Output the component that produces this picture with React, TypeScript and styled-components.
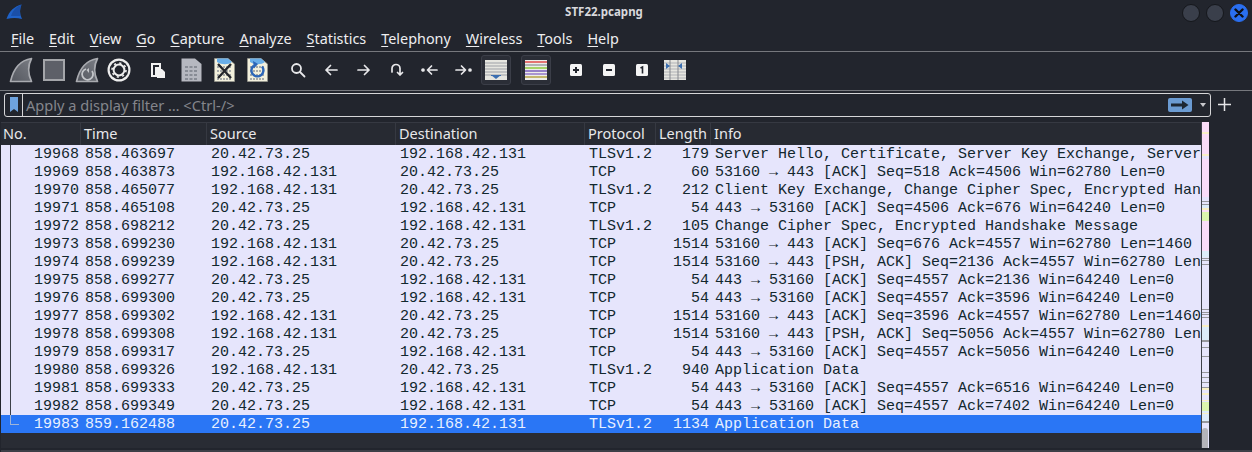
import type { ReactNode } from "react";
import styled, { createGlobalStyle } from "styled-components";

const rows = [
  ["19968", "858.463697", "20.42.73.25", "192.168.42.131", "TLSv1.2", "179", "Server Hello, Certificate, Server Key Exchange, Server Hello Done"],
  ["19969", "858.463873", "192.168.42.131", "20.42.73.25", "TCP", "60", "53160 → 443 [ACK] Seq=518 Ack=4506 Win=62780 Len=0"],
  ["19970", "858.465077", "192.168.42.131", "20.42.73.25", "TLSv1.2", "212", "Client Key Exchange, Change Cipher Spec, Encrypted Handshake Message"],
  ["19971", "858.465108", "20.42.73.25", "192.168.42.131", "TCP", "54", "443 → 53160 [ACK] Seq=4506 Ack=676 Win=64240 Len=0"],
  ["19972", "858.698212", "20.42.73.25", "192.168.42.131", "TLSv1.2", "105", "Change Cipher Spec, Encrypted Handshake Message"],
  ["19973", "858.699230", "192.168.42.131", "20.42.73.25", "TCP", "1514", "53160 → 443 [ACK] Seq=676 Ack=4557 Win=62780 Len=1460"],
  ["19974", "858.699239", "192.168.42.131", "20.42.73.25", "TCP", "1514", "53160 → 443 [PSH, ACK] Seq=2136 Ack=4557 Win=62780 Len=1460"],
  ["19975", "858.699277", "20.42.73.25", "192.168.42.131", "TCP", "54", "443 → 53160 [ACK] Seq=4557 Ack=2136 Win=64240 Len=0"],
  ["19976", "858.699300", "20.42.73.25", "192.168.42.131", "TCP", "54", "443 → 53160 [ACK] Seq=4557 Ack=3596 Win=64240 Len=0"],
  ["19977", "858.699302", "192.168.42.131", "20.42.73.25", "TCP", "1514", "53160 → 443 [ACK] Seq=3596 Ack=4557 Win=62780 Len=1460"],
  ["19978", "858.699308", "192.168.42.131", "20.42.73.25", "TCP", "1514", "53160 → 443 [PSH, ACK] Seq=5056 Ack=4557 Win=62780 Len=1460"],
  ["19979", "858.699317", "20.42.73.25", "192.168.42.131", "TCP", "54", "443 → 53160 [ACK] Seq=4557 Ack=5056 Win=64240 Len=0"],
  ["19980", "858.699326", "192.168.42.131", "20.42.73.25", "TLSv1.2", "940", "Application Data"],
  ["19981", "858.699333", "20.42.73.25", "192.168.42.131", "TCP", "54", "443 → 53160 [ACK] Seq=4557 Ack=6516 Win=64240 Len=0"],
  ["19982", "858.699349", "20.42.73.25", "192.168.42.131", "TCP", "54", "443 → 53160 [ACK] Seq=4557 Ack=7402 Win=64240 Len=0"],
  ["19983", "859.162488", "20.42.73.25", "192.168.42.131", "TLSv1.2", "1134", "Application Data"],
];

const menus: [string, string][] = [
  ["F", "ile"],
  ["E", "dit"],
  ["V", "iew"],
  ["G", "o"],
  ["C", "apture"],
  ["A", "nalyze"],
  ["S", "tatistics"],
  ["T", "elephony"],
  ["W", "ireless"],
  ["T", "ools"],
  ["H", "elp"],
];

const columns = "80px 126px 189px 189px 71px 55px 491px";
const headers = ["No.", "Time", "Source", "Destination", "Protocol", "Length", "Info"];

const YELLOW = "#f8efc4";
const LAVENDER = "#e6e5fc";
const BLUE = "#dcecfa";
const GREEN = "#dcf5ae";
const GREY = "#96979c";

// colored marks in the packet minimap: [top, height, color]
const marks: [number, number, string][] = [
  [10, 2, YELLOW],
  [32, 2, YELLOW],
  [34, 3, LAVENDER],
  [75, 12, LAVENDER],
  [79, 1, GREY],
  [82, 1, GREY],
  [83, 3, BLUE],
  [86, 2, YELLOW],
  [90, 9, GREEN],
  [129, 6, BLUE],
  [135, 69, LAVENDER],
  [136, 1, GREY],
  [138, 1, GREY],
  [142, 1, GREY],
  [187, 1, GREY],
  [190, 1, GREY],
  [192, 1, GREY],
  [195, 1, GREY],
  [203, 2, YELLOW],
  [205, 13, BLUE],
  [218, 2, GREY],
  [220, 106, LAVENDER],
  [225, 1, GREY],
  [234, 1, GREY],
  [250, 1, GREY],
  [255, 1, GREY],
  [260, 1, GREY],
  [265, 1, GREY],
  [266, 2, YELLOW],
  [271, 2, YELLOW],
  [278, 1, YELLOW],
  [280, 9, GREEN],
  [289, 10, BLUE],
  [291, 1, YELLOW],
  [299, 2, GREY],
];

const GlobalStyle = createGlobalStyle`
  html, body {
    margin: 0;
    background: #22252d;
    overflow: hidden;
  }
`;

const Window = styled.div`
  width: 1252px;
  height: 452px;
  display: flex;
  flex-direction: column;
  background: #22252d;
  color: #e4e4e6;
  font-family: "Noto Sans", sans-serif;
  overflow: hidden;
`;

const TitleBar = styled.div`
  height: 26px;
  flex: none;
  display: flex;
  align-items: center;
  justify-content: space-between;
  padding: 0 4px 2px 6px;
  box-sizing: border-box;
  position: relative;
`;

const Title = styled.div`
  position: absolute;
  left: 0;
  right: 44px;
  top: 4px;
  text-align: center;
  font-size: 11.5px;
  font-weight: 700;
  line-height: 16px;
  color: #d8d8dc;
`;

const WindowButtons = styled.div`
  display: flex;
  gap: 6px;
  margin-top: 2px;
`;

const WindowButton = styled.div<{ $close?: boolean }>`
  width: 18px;
  height: 18px;
  box-sizing: border-box;
  border-radius: 50%;
  background: ${(p) => (p.$close ? "#2a6ff0" : "#3a3f4b")};
  border: 1px solid ${(p) => (p.$close ? "#2a6ff0" : "#15171c")};
  display: flex;
  align-items: center;
  justify-content: center;
`;

const MenuBar = styled.div`
  height: 26px;
  flex: none;
  display: flex;
  align-items: center;
  padding-left: 5px;
  box-sizing: border-box;
  border-bottom: 1px solid #76787d;
`;

const MenuItem = styled.div`
  padding: 0 6px;
  margin-right: 3px;
  font-size: 14.4px;
  line-height: 20px;
  color: #eeeef0;
  u {
    text-underline-offset: 2px;
  }
`;

const Toolbar = styled.div`
  height: 39px;
  flex: none;
  display: flex;
  align-items: center;
  padding: 0 0 2px 4px;
  box-sizing: border-box;
  border-bottom: 1px solid #76787d;
`;

const ToolButton = styled.div<{ $boxed?: boolean }>`
  width: 33px;
  height: 30px;
  flex: none;
  display: flex;
  align-items: center;
  justify-content: center;
  box-sizing: border-box;
  border-radius: 3px;
  ${(p) => p.$boxed && "background: #2b2e37; border: 1px solid #3b3e48; width: 30px;"}
`;

const GearButton = styled(ToolButton)`
  width: 31px;
`;

const ToolSeparator = styled.div<{ $w: number }>`
  width: ${(p) => p.$w}px;
  flex: none;
`;

const FilterRow = styled.div`
  height: 31px;
  flex: none;
  display: flex;
  align-items: flex-start;
  padding: 2px 18px 0 4px;
  box-sizing: border-box;
`;

const FilterBox = styled.div`
  flex: 1;
  height: 24px;
  display: flex;
  align-items: center;
  box-sizing: border-box;
  border: 1px solid #d6d6d8;
  border-radius: 3px;
`;

const Bookmark = styled.div`
  width: 18px;
  height: 22px;
  flex: none;
  display: flex;
  align-items: center;
  justify-content: center;
  border-right: 1px solid #d6d6d8;
  box-sizing: border-box;
`;

const FilterText = styled.div`
  flex: 1;
  padding-left: 3px;
  font-size: 14.6px;
  line-height: 20px;
  color: #84858c;
`;

const ApplyButton = styled.div`
  width: 24px;
  height: 14px;
  margin-right: 8px;
  background: #6b9bd2;
  border-radius: 2px;
  display: flex;
  align-items: center;
  justify-content: center;
`;

const DropArrow = styled.div`
  width: 0;
  height: 0;
  margin-right: 4px;
  border-left: 3px solid transparent;
  border-right: 3px solid transparent;
  border-top: 4px solid #c8c8cc;
`;

const AddFilter = styled.div`
  width: 20px;
  height: 22px;
  margin-left: 3px;
  flex: none;
  display: flex;
  align-items: center;
  justify-content: center;
`;

const PacketArea = styled.div`
  display: flex;
  flex: none;
  padding-left: 1px;
  height: 326px;
`;

const PacketTable = styled.div`
  width: 1200px;
  flex: none;
  overflow: hidden;
  background: #292c34;
  border-right: 1px solid #3e414a;
  box-sizing: content-box;
`;

const HeaderRow = styled.div`
  display: grid;
  grid-template-columns: ${columns};
  height: 23px;
  background: #272a32;
  border-top: 1px solid #363942;
  box-sizing: border-box;
`;

const HeaderCell = styled.div`
  padding-left: 3px;
  font-size: 14.5px;
  line-height: 21px;
  color: #e8e8ea;
  border-right: 1px solid #363942;
  &:first-child {
    padding-left: 2px;
  }
`;

const PacketRow = styled.div<{ $selected?: boolean }>`
  display: grid;
  grid-template-columns: ${columns};
  height: 18px;
  background: ${(p) => (p.$selected ? "#2a76f5" : "#e6e5fc")};
  color: ${(p) => (p.$selected ? "#e8f0ff" : "#12272e")};
  font-family: "Liberation Mono", monospace;
  font-size: 15px;
  line-height: 17px;
`;

const Cell = styled.div<{ $right?: boolean }>`
  padding: 1px ${(p) => (p.$right ? "2px" : "4px")} 0 4px;
  white-space: pre;
  overflow: hidden;
  text-align: ${(p) => (p.$right ? "right" : "left")};
`;

const NumberCell = styled(Cell)<{ $last?: boolean }>`
  position: relative;
  padding-right: 2px;
  text-align: right;
  &::before {
    content: "";
    position: absolute;
    left: 9px;
    top: 0;
    height: ${(p) => (p.$last ? "9px" : "18px")};
    border-left: 1px solid ${(p) => (p.$last ? "#9fb4d8" : "#3c4048")};
  }
  &::after {
    content: "";
    display: ${(p) => (p.$last ? "block" : "none")};
    position: absolute;
    left: 9px;
    top: 9px;
    width: 9px;
    border-top: 1px solid #9fb4d8;
  }
`;

const Minimap = styled.div`
  width: 7px;
  flex: none;
  background: #fadcf8;
  position: relative;
`;

const Mark = styled.div<{ $top: number; $height: number; $color: string }>`
  position: absolute;
  left: 0;
  right: 0;
  top: ${(p) => p.$top}px;
  height: ${(p) => p.$height}px;
  background: ${(p) => p.$color};
`;

const Thumb = styled.div`
  position: absolute;
  left: 0;
  width: 6px;
  top: 306px;
  height: 20px;
  background: #b4b4ba;
  border-radius: 3px 3px 0 0;
`;

const BottomGap = styled.div`
  flex: 1;
`;

const BottomBar = styled.div`
  height: 2px;
  flex: none;
  margin-left: 1px;
  background: #3c3f47;
`;

const Fin = ({ swirl, id }: { swirl?: boolean; id: string }) => (
  <svg width="24" height="26" viewBox="0 0 24 26">
    <defs>
      <linearGradient id={id} x1="0" y1="1" x2="1" y2="0">
        <stop offset="0" stopColor="#54575f" />
        <stop offset="1" stopColor="#7a7d84" />
      </linearGradient>
    </defs>
    <path
      d="M22.500 1.500C13 3 5 9 1.500 24.500H22.500C19 17 18.500 9 22.500 1.500Z"
      fill={`url(#${id})`}
      stroke="#a9abb0"
      strokeWidth="1.700"
      strokeLinejoin="round"
    />
    {swirl && (
      <>
        <path d="M11 12A5.500 5.500 0 1 0 17 14" fill="none" stroke="#c4c6ca" strokeWidth="1.800" />
        <path d="M11.500 13 14 11 14 16Z" fill="#c4c6ca" />
      </>
    )}
  </svg>
);

const DocIcon = ({ children }: { children?: ReactNode }) => (
  <svg width="21" height="24" viewBox="0 0 21 24">
    <path d="M0.500 0.500H14L20.500 6V23.500H0.500Z" fill="#f3f0dc" stroke="#9a9a90" strokeWidth="0.700" />
    <path d="M3 0.500H14L18 4C14 7 8 7 3 4Z" fill="#69aee8" />
    <path d="M3 9h15M3 13h15M3 17h15M3 21h15" stroke="#8f9298" strokeWidth="1.400" strokeDasharray="2 1" />
    {children}
  </svg>
);

const SquareSign = ({ children }: { children: ReactNode }) => (
  <svg width="12" height="12" viewBox="0 0 12 12">
    <rect width="12" height="12" rx="1.500" fill="#f4f4f4" />
    {children}
  </svg>
);

const NavArrow = ({ d }: { d: string }) => (
  <svg width="16" height="16" viewBox="0 0 16 16" fill="none" stroke="#e8e8ea" strokeWidth="1.700" strokeLinecap="round" strokeLinejoin="round">
    <path d={d} />
  </svg>
);

export default function App() {
  return (
    <Window>
      <GlobalStyle />
      <TitleBar>
        <svg width="17" height="16" viewBox="0 0 17 16">
          <path d="M15.500 0.500C9 2 3 7 0.500 15C6 13.500 11 13.500 16 15C13.500 10 13.500 5 15.500 0.500Z" fill="#1f62c8" />
          <path d="M15.500 0.500C10 3 7 6 5 12C9 12 12 12 14 12C13.500 9 14 4 15.500 0.500Z" fill="#1a4fa8" />
        </svg>
        <Title>STF22.pcapng</Title>
        <WindowButtons>
          <WindowButton />
          <WindowButton />
          <WindowButton $close>
            <svg width="10" height="10" viewBox="0 0 10 10">
              <path d="M1.500 1.500 8.500 8.500M8.500 1.500 1.500 8.500" stroke="#0e1014" strokeWidth="2.400" strokeLinecap="round" />
            </svg>
          </WindowButton>
        </WindowButtons>
      </TitleBar>

      <MenuBar>
        {menus.map(([key, rest]) => (
          <MenuItem key={key + rest}>
            <u>{key}</u>
            {rest}
          </MenuItem>
        ))}
      </MenuBar>

      <Toolbar>
        <ToolButton>
          <Fin id="fin-start" />
        </ToolButton>
        <ToolButton>
          <svg width="22" height="22" viewBox="0 0 22 22">
            <rect x="1" y="1" width="20" height="20" fill="#5d6068" stroke="#a4a6aa" strokeWidth="2" />
          </svg>
        </ToolButton>
        <ToolButton>
          <Fin id="fin-restart" swirl />
        </ToolButton>
        <GearButton>
          <svg width="24" height="24" viewBox="0 0 24 24" fill="none">
            <circle cx="12" cy="12" r="11.500" fill="#eeeeee" />
            <circle cx="12" cy="12" r="9.300" fill="#22252d" />
            <circle cx="12" cy="12" r="5.400" stroke="#eeeeee" strokeWidth="2" />
            <circle cx="12" cy="12" r="7" stroke="#eeeeee" strokeWidth="1.600" strokeDasharray="2.200 3.300" />
          </svg>
        </GearButton>
        <ToolSeparator $w={8} />
        <ToolButton>
          <svg width="15" height="15" viewBox="0 0 15 15">
            <path d="M1 1H9V5H5V13H1Z" fill="none" stroke="#f2f2f2" strokeWidth="2" />
            <path d="M6 6H11L14 9V15H6Z" fill="#f2f2f2" />
          </svg>
        </ToolButton>
        <ToolButton>
          <svg width="21" height="24" viewBox="0 0 21 24">
            <path d="M0.500 0.500H14L20.500 6V23.500H0.500Z" fill="#b6b8c0" />
            <path d="M4 9h13M4 13h13M4 17h13M4 21h13" stroke="#7a7d86" strokeWidth="1.600" strokeDasharray="3 1.500" />
          </svg>
        </ToolButton>
        <ToolButton>
          <DocIcon>
            <path d="M4 6 17 20M17 6 4 20" stroke="#24262c" strokeWidth="2.400" />
          </DocIcon>
        </ToolButton>
        <ToolButton>
          <DocIcon>
            <path d="M7 7.500A6 6 0 1 0 15 8.500" fill="none" stroke="#2c66b8" strokeWidth="2.400" />
            <path d="M6 3 11 6 7 10.500Z" fill="#2c66b8" />
          </DocIcon>
        </ToolButton>
        <ToolSeparator $w={7} />
        <ToolButton>
          <svg width="16" height="16" viewBox="0 0 16 16" fill="none" stroke="#e8e8ea" strokeWidth="1.800">
            <circle cx="6.500" cy="6.500" r="4.500" />
            <path d="M10 10 14.500 14.500" strokeLinecap="round" />
          </svg>
        </ToolButton>
        <ToolButton>
          <NavArrow d="M14 8H3M7.500 3.500 3 8l4.500 4.500" />
        </ToolButton>
        <ToolButton>
          <NavArrow d="M2 8H13M8.500 3.500 13 8l-4.500 4.500" />
        </ToolButton>
        <ToolButton>
          <NavArrow d="M3 10V6.500a4 4 0 0 1 8 0V13M8.500 10.500 11 13l2.500-2.500" />
        </ToolButton>
        <ToolButton>
          <svg width="18" height="16" viewBox="0 0 18 16" fill="none" stroke="#e8e8ea" strokeWidth="1.700" strokeLinecap="round" strokeLinejoin="round">
            <circle cx="2" cy="8" r="1" fill="#e8e8ea" />
            <path d="M16 8H7M10.500 4 6.500 8l4 4" />
          </svg>
        </ToolButton>
        <ToolButton>
          <svg width="18" height="16" viewBox="0 0 18 16" fill="none" stroke="#e8e8ea" strokeWidth="1.700" strokeLinecap="round" strokeLinejoin="round">
            <circle cx="16" cy="8" r="1" fill="#e8e8ea" />
            <path d="M2 8H11M7.500 4l4 4-4 4" />
          </svg>
        </ToolButton>
        <ToolSeparator $w={2} />
        <ToolButton $boxed>
          <svg width="22" height="20" viewBox="0 0 22 20">
            <rect width="22" height="20" fill="#e6e6e0" />
            <path d="M0 3h22M0 6h22M0 9h22M0 12h22M0 15h22" stroke="#9da0a6" strokeWidth="1" />
            <path d="M11 19 6 15H16Z" fill="#3a6eb0" />
            <rect x="6" y="15" width="10" height="1" fill="#3a6eb0" />
          </svg>
        </ToolButton>
        <ToolSeparator $w={10} />
        <ToolButton $boxed>
          <svg width="22" height="20" viewBox="0 0 22 20">
            <rect width="22" height="20" fill="#eeeeea" />
            <path d="M0 2h22" stroke="#e02020" strokeWidth="1.200" />
            <path d="M0 5h22" stroke="#8a8d94" strokeWidth="1.200" />
            <path d="M0 8h22" stroke="#78c010" strokeWidth="1.200" />
            <path d="M0 11h22" stroke="#5a38b0" strokeWidth="1.200" />
            <path d="M0 14h22" stroke="#7c5ac0" strokeWidth="1.200" />
            <path d="M0 17h22" stroke="#a8901c" strokeWidth="1.200" />
          </svg>
        </ToolButton>
        <ToolSeparator $w={8} />
        <ToolButton>
          <SquareSign>
            <path d="M3 6H9M6 3V9" stroke="#22252d" strokeWidth="2" />
          </SquareSign>
        </ToolButton>
        <ToolButton>
          <SquareSign>
            <path d="M3 6H9" stroke="#22252d" strokeWidth="2" />
          </SquareSign>
        </ToolButton>
        <ToolButton>
          <SquareSign>
            <path d="M4.500 4 6.500 3V9.500" fill="none" stroke="#22252d" strokeWidth="1.600" />
          </SquareSign>
        </ToolButton>
        <ToolButton>
          <svg width="22" height="20" viewBox="0 0 22 20">
            <rect width="22" height="20" fill="#e6e6e0" />
            <path d="M0 3h22M0 6h22M0 9h22M0 12h22M0 15h22M0 18h22" stroke="#b0b2b6" strokeWidth="1" />
            <path d="M6 0V20M14 0V20" stroke="#85888e" strokeWidth="1" />
            <path d="M2 3 6 6 2 9ZM18 3 14 6 18 9Z" fill="#3a6eb0" />
          </svg>
        </ToolButton>
      </Toolbar>

      <FilterRow>
        <FilterBox>
          <Bookmark>
            <svg width="8" height="16" viewBox="0 0 8 16">
              <path d="M0 0H8V15L4 12 0 15Z" fill="#6ea3de" />
            </svg>
          </Bookmark>
          <FilterText>Apply a display filter … &lt;Ctrl-/&gt;</FilterText>
          <ApplyButton>
            <svg width="18" height="10" viewBox="0 0 18 10">
              <path d="M0 3.500H11V0.500L17.500 5 11 9.500V6.500H0Z" fill="#1d2733" />
            </svg>
          </ApplyButton>
          <DropArrow />
        </FilterBox>
        <AddFilter>
          <svg width="13" height="13" viewBox="0 0 13 13">
            <path d="M6.500 0V13M0 6.500H13" stroke="#e6e6e8" strokeWidth="1.500" />
          </svg>
        </AddFilter>
      </FilterRow>

      <PacketArea>
        <PacketTable>
          <HeaderRow>
            {headers.map((h) => (
              <HeaderCell key={h}>{h}</HeaderCell>
            ))}
          </HeaderRow>
          {rows.map((r, i) => {
            const last = i === rows.length - 1;
            return (
              <PacketRow key={r[0]} $selected={last}>
                <NumberCell $last={last}>{r[0]}</NumberCell>
                <Cell>{r[1]}</Cell>
                <Cell>{r[2]}</Cell>
                <Cell>{r[3]}</Cell>
                <Cell>{r[4]}</Cell>
                <Cell $right>{r[5]}</Cell>
                <Cell>{r[6]}</Cell>
              </PacketRow>
            );
          })}
        </PacketTable>
        <Minimap>
          {marks.map(([top, height, color]) => (
            <Mark key={`${top}-${color}`} $top={top} $height={height} $color={color} />
          ))}
          <Thumb />
        </Minimap>
      </PacketArea>

      <BottomGap />
      <BottomBar />
    </Window>
  );
}
